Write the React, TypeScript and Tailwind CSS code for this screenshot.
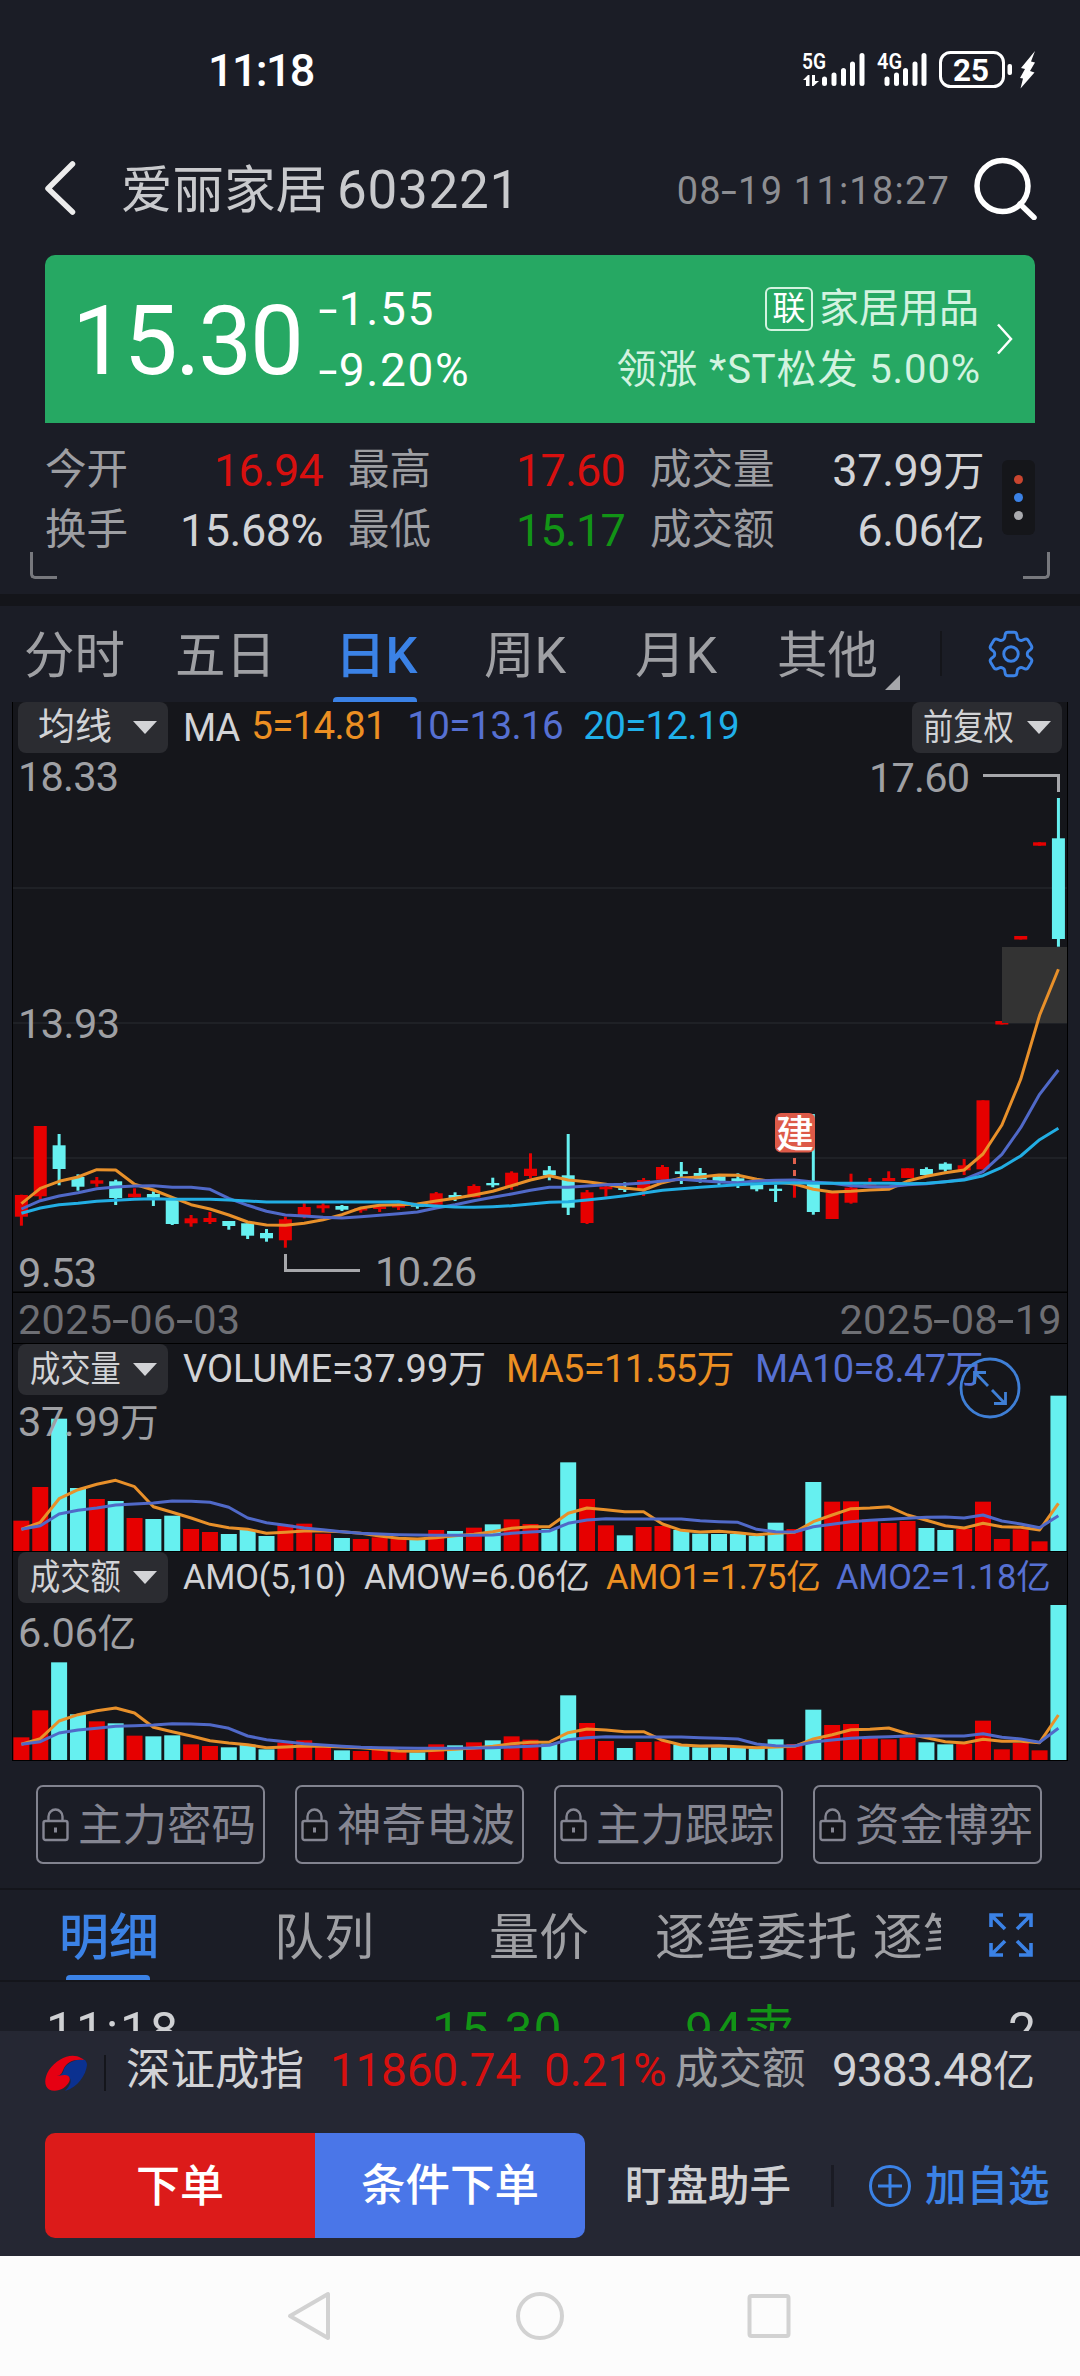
import React from "react";
import { HiOutlineCog6Tooth } from "react-icons/hi2";

const PITCH = 18.855;
const FIRST_X = 21.4;
const cx = (i: number) => FIRST_X + i * PITCH;

const RED = "#e60000";
const CYAN = "#66f0f0";
const ORANGE = "#e8902a";
const VIOLET = "#5069c8";
const SKY = "#22aee4";

// Direction of every session: r = up, c = down.
const DIR = "rrccrcrccrrcccrrrcrrrcrcrcrrccrrcrrccccccrcrrrrrccrrrrrc";

// [high, body top, body bottom, low] for each session.
const CANDLES: number[][] = [
  [1194.7, 1195, 1216.7, 1225.7], [1126, 1126, 1196.3, 1199.3], [1134, 1145.3, 1169, 1185.3], [1174.3, 1177, 1186.7, 1190.7],
  [1177, 1180.3, 1183.7, 1186.7], [1179.7, 1181.3, 1198, 1205], [1188.3, 1193.7, 1197.3, 1197.3], [1191.3, 1194, 1197.7, 1206],
  [1200, 1200, 1224, 1225], [1215, 1218.3, 1223.3, 1226.7], [1212, 1218, 1222, 1224], [1221, 1221, 1226, 1229.7],
  [1223.3, 1223.3, 1235.7, 1239], [1229, 1233, 1238.3, 1241.7], [1216.7, 1219.3, 1240.3, 1247.7], [1203.3, 1207, 1215.3, 1218.3],
  [1203.3, 1205.3, 1208.3, 1212.7], [1205, 1206, 1209.7, 1211], [1207, 1208.3, 1210.5, 1212.7], [1205.3, 1206.7, 1209, 1212],
  [1203.3, 1205, 1207.5, 1210], [1204, 1204.7, 1206.7, 1208.7], [1192, 1193.3, 1204.7, 1205.5], [1192.3, 1195, 1198.3, 1201],
  [1184.3, 1186, 1197.3, 1197.3], [1177.7, 1183, 1185.3, 1187.3], [1171.3, 1172.7, 1186.3, 1189.7], [1153.3, 1168.7, 1176, 1178.3],
  [1166, 1170.3, 1175.3, 1180.3], [1134, 1175.3, 1207.7, 1215], [1190, 1192.3, 1223, 1224], [1184, 1186.7, 1189.3, 1196.7],
  [1182.3, 1187.7, 1190, 1192], [1178, 1180, 1189.3, 1196], [1165, 1167, 1179.7, 1179.7], [1162, 1171.3, 1174, 1184],
  [1168, 1173, 1179.3, 1182.7], [1174, 1176.3, 1182.7, 1185.7], [1173.3, 1178.3, 1181.7, 1188], [1183, 1184.7, 1189.3, 1191.3],
  [1184.7, 1188.7, 1191, 1202], [1182.7, 1183, 1185.3, 1197.7], [1114, 1184, 1212, 1214.7], [1191.3, 1192.7, 1219, 1219],
  [1173.7, 1187.7, 1202.7, 1203.7], [1178, 1183, 1185.5, 1186], [1171.3, 1178, 1181, 1181], [1168.3, 1168.3, 1178, 1178],
  [1167.3, 1169, 1175, 1175], [1162.3, 1163.7, 1169.7, 1171.7], [1159, 1165.3, 1170.3, 1175], [1100.3, 1100.3, 1169.3, 1169.3],
  [1021, 1021, 1024.5, 1024.5], [936, 936, 939.5, 939.5], [842.3, 842.3, 845.7, 845.7], [798, 838.3, 939, 946.7],
];

const PRICE_MA5 = [
  1203.7, 1188.3, 1181.3, 1177, 1169.7, 1170, 1184.3, 1190, 1197.3, 1204.7, 1209, 1215, 1222, 1225, 1225.3, 1223.3, 1219.7, 1214.7,
  1208, 1205.3, 1204.7, 1204, 1201, 1198.3, 1195, 1191.3, 1185.7, 1180, 1175.7, 1180, 1181.7, 1184.3, 1188, 1190, 1182.7, 1178, 1177,
  1175, 1175.3, 1179.3, 1182, 1184, 1189.3, 1192, 1191.3, 1190, 1189.3, 1181, 1176.3, 1172.7, 1170, 1154, 1125, 1079.3, 1015.3, 969.3,
];
const PRICE_MA10 = [
  1209, 1200.7, 1196, 1192.7, 1188.7, 1187, 1186, 1185.7, 1187.3, 1187.3, 1189.3, 1198.3, 1205.3, 1211.3, 1215, 1216, 1217.3, 1218,
  1216.7, 1215.3, 1213.7, 1212, 1208, 1204.7, 1200.7, 1197.3, 1194, 1190.3, 1187.3, 1187.3, 1186, 1184.7, 1184.3, 1183, 1181, 1179.3,
  1180.7, 1182, 1182.7, 1181, 1180.3, 1180, 1182, 1183.3, 1185.7, 1186.7, 1186.7, 1184.7, 1183.7, 1181.7, 1179.3, 1171.7, 1154.3,
  1127.7, 1094.3, 1070,
];
const PRICE_MA20 = [
  1213.3, 1208, 1204.7, 1203.3, 1201.3, 1200.3, 1199.3, 1198.7, 1199.3, 1199.3, 1199.3, 1200, 1201, 1202, 1202, 1202, 1202, 1202, 1202,
  1202, 1201.7, 1205, 1206, 1207, 1207.3, 1206.7, 1205.7, 1204, 1202.3, 1201.7, 1200, 1198, 1195.7, 1193, 1190.3, 1188.7, 1187.3, 1186,
  1184.7, 1183.7, 1183.3, 1182.7, 1183.3, 1183.3, 1183.3, 1183.3, 1183.3, 1183.7, 1183.3, 1181.7, 1180, 1175.7, 1167.3, 1156, 1139.7,
  1128.3,
];

// Volume and turnover levels, in thirds of a pixel.
const VOL = [
  572, 471, 266, 474, 507, 513, 564, 567, 557, 597, 606, 612, 600, 618, 584, 581, 611, 624, 627, 622, 627, 630, 600, 603, 593, 583, 568,
  582, 597, 397, 507, 586, 616, 591, 588, 600, 611, 612, 612, 617, 578, 597, 456, 515, 514, 568, 579, 573, 594, 600, 597, 515, 627, 598,
  634, 197,
];
const VOL_MA5 = [
  598, 577, 506, 479, 463, 451, 470, 530, 547, 564, 583, 593, 598, 610, 607, 603, 603, 605, 610, 618, 625, 627, 623, 617, 613, 605, 595,
  590, 590, 550, 534, 539, 545, 545, 582, 601, 606, 604, 608, 614, 610, 607, 575, 555, 536, 534, 530, 555, 571, 587, 594, 580, 590, 592,
  600, 520,
];
const VOL_MA10 = [
  598, 587, 552, 541, 534, 525, 522, 519, 513, 514, 517, 532, 564, 578, 586, 594, 599, 605, 610, 612, 614, 615, 616, 616, 616, 615, 610,
  606, 603, 580, 570, 566, 567, 567, 567, 567, 572, 575, 577, 598, 605, 606, 590, 583, 575, 571, 568, 565, 562, 561, 564, 555, 573, 582,
  593, 557,
];
const AMO = [
  1221, 1140, 996, 1152, 1173, 1179, 1216, 1218, 1215, 1242, 1247, 1251, 1243, 1257, 1237, 1230, 1250, 1260, 1262, 1259, 1262, 1266,
  1242, 1245, 1236, 1230, 1218, 1228, 1240, 1095, 1178, 1232, 1253, 1235, 1233, 1243, 1251, 1251, 1251, 1254, 1227, 1241, 1138, 1184,
  1181, 1222, 1227, 1222, 1236, 1242, 1240, 1171, 1257, 1238, 1260, 824,
];
const AMO_MA5 = [
  1242, 1225, 1172, 1153, 1141, 1133, 1148, 1191, 1204, 1217, 1231, 1238, 1243, 1252, 1250, 1247, 1248, 1250, 1252, 1257, 1262, 1263,
  1260, 1257, 1253, 1248, 1240, 1236, 1235, 1207, 1196, 1199, 1204, 1204, 1230, 1244, 1247, 1246, 1249, 1252, 1250, 1248, 1226, 1213,
  1198, 1197, 1193, 1210, 1222, 1234, 1238, 1227, 1233, 1233, 1237, 1154,
];
const AMO_MA10 = [
  1242, 1234, 1208, 1199, 1194, 1188, 1186, 1184, 1180, 1181, 1183, 1194, 1217, 1228, 1234, 1240, 1244, 1248, 1251, 1252, 1253, 1254,
  1254, 1254, 1253, 1252, 1250, 1248, 1245, 1228, 1222, 1219, 1220, 1220, 1220, 1220, 1222, 1224, 1226, 1241, 1246, 1247, 1235, 1229,
  1224, 1221, 1219, 1217, 1216, 1217, 1217, 1210, 1221, 1226, 1236, 1194,
];

const points = (ys: number[], f: (v: number) => number = (v) => v) => ys.map((v, i) => `${cx(i).toFixed(1)},${f(v).toFixed(1)}`).join(" ");

function Line({ ys, color, f }: { ys: number[]; color: string; f?: (v: number) => number }) {
  return <polyline points={points(ys, f)} fill="none" stroke={color} strokeWidth={3} strokeLinejoin="round" />;
}

/** Wide hyphen used in dates and signed figures. */
function Dash() {
  return <span className="mx-[0.06em] inline-block origin-center scale-x-150">-</span>;
}

function StatusBar() {
  return (
    <div className="relative flex h-[140px] shrink-0 items-center pl-[208px] pr-[45px] text-white">
      <span className="text-[45px] font-medium leading-none tracking-[-1.700px]">11:18</span>
      <svg className="ml-auto" width="234" height="44" viewBox="801 47 234 44" fill="#fff">
        <text x="802" y="68" fontSize="22.5" fontWeight="600" textLength="24" lengthAdjust="spacingAndGlyphs">5G</text>
        <path d="M803 79l5-5h1.500v11h-3.500v-6zM812 74h3v6h4l-5.500 5h-1.500z" />
        <g stroke="#fff" strokeWidth="5" strokeLinecap="round">
          <path d="M824.500 78v4.500M834 74v8.500M843.500 69.500v13M852.500 63v19.500M862 54.500v28" />
          <path d="M887 78v4.500M896.500 74v8.500M905.500 69.500v13M915 63v19.500M924 54.500v28" />
        </g>
        <text x="877" y="68" fontSize="22.500" fontWeight="600" textLength="25" lengthAdjust="spacingAndGlyphs">4G</text>
        <rect x="940.500" y="51.500" width="63" height="34" rx="10" fill="none" stroke="#fff" strokeWidth="3" />
        <text x="953" y="80" fontSize="32" fontWeight="700" textLength="36" lengthAdjust="spacingAndGlyphs">25</text>
        <rect x="1007.500" y="63" width="4.500" height="11" rx="2" />
        <path d="M1035 50l-14 17 4 1-5 9 3 .5-2.500 10 14-16-4.500-1.500 5-8.500-4-1z" />
      </svg>
    </div>
  );
}

function Header() {
  return (
    <div className="flex h-[96px] shrink-0 items-center pl-[42px] pr-[42px]">
      <svg width="36" height="60" viewBox="0 0 36 60" fill="none" stroke="#ececec" strokeWidth="5.500" strokeLinecap="round" strokeLinejoin="round">
        <path d="M30.500 6L6 30.500 30.500 54" />
      </svg>
      <span className="ml-[43px] mt-[5px] text-[51.500px] leading-none text-[#c9cacd]">爱丽家居</span>
      <span className="ml-[10px] mt-[5px] text-[53px] leading-none tracking-[0.700px] text-[#c9cacd]">603221</span>
      <span className="ml-auto mt-[6px] text-[38px] leading-none tracking-[1.200px] text-[#8d8e92]">
        08
        <Dash />
        19 11:18:27
      </span>
      <svg className="ml-[23px]" width="65" height="64" viewBox="972 156 65 64" fill="none" stroke="#fff" strokeWidth="5.500" strokeLinecap="round">
        <circle cx="1001.500" cy="186" r="25.500" />
        <path d="M1019 204l14 13.500" />
      </svg>
    </div>
  );
}

function QuoteCard() {
  return (
    <div className="mx-[45px] mt-[19px] flex h-[168px] shrink-0 items-center rounded-t-[10px] bg-[#26a863] pl-[27px] text-white">
      <span className="mt-[4px] w-[238px] text-[96px] leading-none tracking-[-2.300px]">15.30</span>
      <div className="ml-[9px] mt-[2px] flex flex-col text-[46px] leading-[61px] tracking-[1.600px]">
        <span>
          <Dash />
          1.55
        </span>
        <span>
          <Dash />
          9.20%
        </span>
      </div>
      <div className="ml-auto flex flex-col items-end text-[40px] leading-[61px] text-[#d3f3e0]">
        <div className="flex items-center">
          <span className="mr-[6px] flex h-[44px] w-[48px] items-center justify-center rounded-[6px] border-2 border-[#d3f3e0] text-[33px] leading-none text-white">联</span>
          家居用品
        </div>
        <span className="mr-[-2px] tracking-[0.900px]">领涨 *ST松发 5.00%</span>
      </div>
      <svg className="ml-[17px] mr-[22px]" width="17" height="32" viewBox="0 0 17 32" fill="none" stroke="#fff" strokeWidth="2.500">
        <path d="M2 1.500L15 16 2 30.500" />
      </svg>
    </div>
  );
}

function Stat({ label, value, className }: { label: string; value: React.ReactNode; className: string }) {
  return (
    <div className="flex h-[60px] items-center justify-between leading-none">
      <span className="text-[41.500px] text-[#9d9ea2]">{label}</span>
      <span className={className}>{value}</span>
    </div>
  );
}

function Stats() {
  return (
    <div className="relative flex h-[171px] shrink-0 pl-[45px] pt-[17px]">
      <div className="w-[278px]">
        <Stat label="今开" value="16.94" className="text-[45px] tracking-[-0.800px] text-[#d8100f]" />
        <Stat label="换手" value="15.68%" className="text-[45px] tracking-[-0.500px] text-[#d2d3d6]" />
      </div>
      <div className="ml-[25px] w-[277px]">
        <Stat label="最高" value="17.60" className="text-[45px] tracking-[-0.800px] text-[#d8100f]" />
        <Stat label="最低" value="15.17" className="text-[45px] tracking-[-0.800px] text-[#129416]" />
      </div>
      <div className="ml-[25px] w-[334px]">
        <Stat label="成交量" value={<>37.99<span className="text-[41px]">万</span></>} className="text-[45px] tracking-[-0.400px] text-[#d2d3d6]" />
        <Stat label="成交额" value={<>6.06<span className="text-[41px]">亿</span></>} className="text-[45px] tracking-[-0.400px] text-[#d2d3d6]" />
      </div>
      <div className="ml-[18px] mt-[20px] flex h-[75px] w-[33px] flex-col items-center justify-center gap-[9px] rounded-[6px] bg-[#15161a]">
        <span className="size-[9px] rounded-full bg-[#c8452f]" />
        <span className="size-[9px] rounded-full bg-[#3b82e6]" />
        <span className="size-[9px] rounded-full bg-[#a9aaae]" />
      </div>
      <span className="absolute bottom-[15px] left-[30px] h-[27px] w-[27px] rounded-bl-[5px] border-b-[3px] border-l-[3px] border-[#77787d]" />
      <span className="absolute bottom-[15px] right-[30px] h-[27px] w-[27px] rounded-br-[5px] border-b-[3px] border-r-[3px] border-[#77787d]" />
    </div>
  );
}

function PeriodTabs() {
  return (
    <div className="relative flex h-[96px] shrink-0 items-center pl-[24px] pt-[5px] text-[50.500px] leading-none text-[#9fa0a4]">
      <span className="w-[151px]">分时</span>
      <span className="w-[160px]">五日</span>
      <span className="w-[149px] font-medium text-[#3b82e6]">日K</span>
      <span className="w-[151px]">周K</span>
      <span className="w-[142px]">月K</span>
      <span>其他</span>
      <svg className="ml-[7px] mt-[51px]" width="15" height="15" viewBox="0 0 15 15">
        <path d="M15 0v15H0z" fill="#a6a7ab" />
      </svg>
      <span className="absolute bottom-0 left-[333px] h-[5px] w-[84px] rounded-t-[4px] bg-[#3b82e6]" />
      <span className="absolute left-[940px] top-[25px] h-[45px] w-[2px] bg-[#14151a]" />
      <HiOutlineCog6Tooth className="absolute left-[982px] top-[19px] size-[58px] text-[#3b82e6] [stroke-width:1.2]" />
    </div>
  );
}

function Caret() {
  return (
    <svg className="absolute right-[11px]" width="24" height="13" viewBox="0 0 24 13">
      <path d="M0 0h24L12 13z" fill="#d2d3d6" />
    </svg>
  );
}

function Picker({ label, className }: { label: string; className: string }) {
  return (
    <div className={`relative flex h-[51px] w-[150px] shrink-0 items-center rounded-[8px] bg-[#2b2c31] leading-none text-[#d2d3d6] ${className}`}>
      <span className="origin-left scale-x-[inherit]">{label}</span>
      <Caret />
    </div>
  );
}

function NarrowPicker({ label, className }: { label: string; className: string }) {
  return (
    <div className={`relative flex h-[51px] w-[150px] shrink-0 items-center rounded-[8px] bg-[#2b2c31] ${className}`}>
      <span className="origin-left scale-x-[0.84] text-[36px] leading-none text-[#d2d3d6]">{label}</span>
      <Caret />
    </div>
  );
}

function PriceChart() {
  return (
    <div className="relative h-[642px] border-b border-black">
      <div className="flex h-[51px] items-center pl-[5px]">
        <Picker label="均线" className="pl-[20px] text-[37px]" />
        <span className="ml-[15px] text-[38px] leading-none tracking-[-1px] text-[#d2d3d6]">MA</span>
        <div className="mb-[2px] ml-[12px] flex text-[38.500px] leading-none tracking-[-0.700px]">
          <span className="w-[156px] text-[#ec8f22]">5=14.81</span>
          <span className="w-[176px] text-[#5670d2]">10=13.16</span>
          <span className="text-[#20b0ea]">20=12.19</span>
        </div>
        <NarrowPicker label="前复权" className="ml-auto mr-[5px] pl-[11px]" />
      </div>
      <svg className="block" width="1054" height="540" viewBox="13 753 1054 540">
        <g fill="#1f2126">
          <rect x="13" y="887" width="1054" height="2" />
          <rect x="13" y="1022" width="1054" height="2" />
          <rect x="13" y="1157" width="1054" height="2" />
        </g>
        {CANDLES.map(([hi, top, bot, lo], i) => (
          <g key={i} fill={DIR[i] === "r" ? RED : CYAN}>
            <rect x={cx(i) - 1.5} y={hi} width={3} height={lo - hi} />
            <rect x={cx(i) - (i === 41 ? 1.5 : 6.5)} y={top} width={i === 41 ? 3 : 13} height={bot - top} />
          </g>
        ))}
        <rect x="1002" y="947" width="65" height="76" fill="#333333" />
        <Line ys={PRICE_MA5} color={ORANGE} />
        <Line ys={PRICE_MA10} color={VIOLET} />
        <Line ys={PRICE_MA20} color={SKY} />
        <path d="M794.500 1158v6M794.500 1170v6" stroke="#e0604c" strokeWidth="3" />
        <rect x="775" y="1113" width="40" height="39.500" rx="6" fill="#dd5a48" />
        <text x="795" y="1147" textAnchor="middle" fontSize="38" fontWeight="500" fill="#fff">建</text>
        <path d="M983 775.500h75.500V792M285.500 1254v16.500H360" fill="none" stroke="#a6a7ab" strokeWidth="3" />
        <g fill="#9fa0a4" fontSize="41.500">
          <text x="18" y="791" textLength="101">18.33</text>
          <text x="869" y="792" textLength="101">17.60</text>
          <text x="18" y="1038" textLength="102">13.93</text>
          <text x="18" y="1287" textLength="79">9.53</text>
          <text x="375" y="1286" textLength="102">10.26</text>
        </g>
        <rect x="13" y="1291.500" width="1054" height="1.500" fill="#000" />
      </svg>
      <div className="flex h-[50px] items-center justify-between pl-[5px] pr-[5px] pt-[3px] text-[41.500px] leading-none tracking-[0.300px] text-[#6e6f74]">
        <span>
          2025
          <Dash />
          06
          <Dash />
          03
        </span>
        <span>
          2025
          <Dash />
          08
          <Dash />
          19
        </span>
      </div>
    </div>
  );
}

function BarChart({ bars, ma5, ma10, base, height }: { bars: number[]; ma5: number[]; ma10: number[]; base: number; height: number }) {
  const y = (v: number) => height - (base - v) / 3;
  return (
    <svg className="block" width="1054" height={height} viewBox={`13 0 1054 ${height}`}>
      {bars.map((v, i) => (
        <rect key={i} x={cx(i) - 8} y={y(v)} width={16} height={height - y(v)} fill={DIR[i] === "r" ? RED : CYAN} />
      ))}
      <Line ys={ma5} color={ORANGE} f={y} />
      <Line ys={ma10} color={VIOLET} f={y} />
    </svg>
  );
}

function VolumePanel() {
  return (
    <div className="relative h-[208px] border-b border-black">
      <div className="flex h-[51px] items-center pl-[5px]">
        <NarrowPicker label="成交量" className="pl-[12px]" />
        <div className="mb-[2px] ml-[15px] flex whitespace-nowrap text-[38px] leading-none">
          <span className="w-[323px] text-[#d2d3d6]">VOLUME=37.99万</span>
          <span className="w-[249px] tracking-[-0.600px] text-[#ec8f22]">MA5=11.55万</span>
          <span className="tracking-[-0.600px] text-[#5670d2]">MA10=8.47万</span>
        </div>
      </div>
      <BarChart bars={VOL} ma5={VOL_MA5} ma10={VOL_MA10} base={663} height={156} />
      <span className="absolute left-[5px] top-[57px] text-[41.500px] leading-none tracking-[-0.400px] text-[#9fa0a4]">
        37.99<span className="text-[38.500px]">万</span>
      </span>
      <svg className="absolute left-[946px] top-[13px]" width="62" height="62" viewBox="-31 -31 62 62" fill="none" stroke="#3f7fd6" strokeWidth="2.800">
        <circle r="29" />
        <path d="M-2-2L-14.500-15M-15.500-4V-15.500H-4M2 2L14.500 15M15.500 4V15.500H4" />
      </svg>
    </div>
  );
}

function TurnoverPanel() {
  return (
    <div className="relative h-[209px] border-b border-black">
      <div className="flex h-[51px] items-center pl-[5px]">
        <NarrowPicker label="成交额" className="pl-[12px]" />
        <div className="ml-[15px] flex whitespace-nowrap text-[34.500px] leading-none tracking-[-0.200px]">
          <span className="w-[181px] text-[#d2d3d6]">AMO(5,10)</span>
          <span className="w-[242px] text-[#d2d3d6]">AMOW=6.06亿</span>
          <span className="w-[230px] text-[#ec8f22]">AMO1=1.75亿</span>
          <span className="text-[#5670d2]">AMO2=1.18亿</span>
        </div>
      </div>
      <BarChart bars={AMO} ma5={AMO_MA5} ma10={AMO_MA10} base={1289} height={157} />
      <span className="absolute left-[5px] top-[60px] text-[41.500px] leading-none tracking-[-0.400px] text-[#9fa0a4]">
        6.06<span className="text-[39px]">亿</span>
      </span>
    </div>
  );
}

function LockedTools() {
  return (
    <div className="flex h-[127px] shrink-0 gap-[30px] pl-[36px] pt-[24px]">
      {["主力密码", "神奇电波", "主力跟踪", "资金博弈"].map((name) => (
        <div key={name} className="flex h-[79px] w-[229px] items-center whitespace-nowrap rounded-[7px] border-2 border-[#82838f] pl-[4px] text-[44.500px] leading-none text-[#858692]">
          <svg className="mr-[9px] shrink-0" width="27" height="34" viewBox="0 0 27 34" fill="none" stroke="#858692" strokeWidth="2.400">
            <path d="M6.500 13V8.500a7 7 0 0 1 14 0V13" />
            <rect x="1.500" y="13" width="24" height="19" rx="2" fill="#15161a" />
            <path d="M13.500 19.500v5" strokeWidth="3" />
          </svg>
          <span className="mt-[3px]">{name}</span>
        </div>
      ))}
    </div>
  );
}

function DetailTabs() {
  return (
    <div className="relative flex h-[94px] shrink-0 items-center border-y-2 border-[#14151b] pl-[59px] text-[50px] leading-none text-[#9fa0a4]">
      <span className="mt-[5px] w-[215px] font-medium text-[#3b82e6]">明细</span>
      <span className="mt-[5px] w-[215px]">队列</span>
      <span className="mt-[5px] w-[166px]">量价</span>
      <div className="mt-[5px] flex w-[286px] overflow-hidden whitespace-nowrap leading-[60px]">
        <span className="mr-[15px] tracking-[0.700px]">逐笔委托</span>
        <span>逐笔成交</span>
      </div>
      <svg className="ml-[48px]" width="44" height="44" viewBox="0 0 44 44" fill="none" stroke="#3b82e6" strokeWidth="3.600">
        <path d="M2 14V2h12M2 2l14 14M30 2h12v12M42 2L28 16M2 30v12h12M2 42l14-14M42 30v12H30M42 42L28 28" />
      </svg>
      <span className="absolute bottom-0 left-[66px] h-[5px] w-[84px] rounded-t-[4px] bg-[#3b82e6]" />
    </div>
  );
}

function TradeRow() {
  return (
    <div className="h-[49px] shrink-0 overflow-hidden">
      <div className="mt-[21px] flex items-center pl-[46px] pr-[44px] text-[50px] leading-[56px] text-[#cfd0d3]">
        <span className="w-[386px] tracking-[1.900px]">11:18</span>
        <span className="w-[253px] tracking-[1px] text-[#129416]">15.30</span>
        <span className="tracking-[1px] text-[#129416]">
          94<span className="text-[52px]">卖</span>
        </span>
        <span className="ml-auto">2</span>
      </div>
    </div>
  );
}

function IndexStrip() {
  return (
    <div className="flex h-[78px] shrink-0 items-center whitespace-nowrap pl-[45px] leading-none">
      <svg className="mt-[6px]" width="42" height="37" viewBox="0 0 42 37">
        <path d="M42 10C41 20 33 32 20 36c6-6 7-11 4-14-3-3-8 0-11-1 4-1 5-3 6-7 3-6 13-11 21-9 1 1 2 3 2 5z" fill="#0b3190" />
        <path d="M36 3C27-3 12 3 4 15-1 23-1 31 4 34.500 11 38 21 34 24.500 26c1-4-1-6-5-6-3 0-5 1-7.500 1 5-1 5-4 7-8 3-6 10-9.500 20-8-1-1-2-1.500-3-2z" fill="#e60012" />
      </svg>
      <span className="ml-[17px] mt-[5px] h-[36px] w-[2px] bg-[#14151b]" />
      <span className="ml-[20px] text-[44.500px] text-[#d2d3d6]">深证成指</span>
      <span className="ml-[26px] w-[214px] text-[46px] tracking-[-0.300px] text-[#d8100f]">11860.74</span>
      <span className="w-[131px] text-[46px] tracking-[-0.200px] text-[#d8100f]">0.21%</span>
      <span className="text-[43.500px] text-[#9d9ea2]">成交额</span>
      <span className="ml-auto mr-[46px] text-[46px] tracking-[-0.900px] text-[#d2d3d6]">
        9383.48<span className="text-[42px]">亿</span>
      </span>
    </div>
  );
}

function ActionBar() {
  return (
    <div className="flex shrink-0 items-center whitespace-nowrap pl-[45px] pt-[24px] leading-none">
      <button className="h-[105px] w-[270px] rounded-l-[10px] bg-[#dc1b1a] pt-[2px] text-[44px] font-medium text-white">下单</button>
      <button className="h-[105px] w-[270px] rounded-r-[10px] bg-[#4a76e8] pt-[2px] text-[44.500px] font-medium text-white">条件下单</button>
      <span className="ml-[40px] mt-[3px] text-[41.500px] font-medium text-[#cfd0d3]">盯盘助手</span>
      <span className="ml-[40px] h-[42px] w-[3px] bg-[#1a1b24]" />
      <svg className="ml-[34px]" width="44" height="44" viewBox="-22 -22 44 44" fill="none" stroke="#3b82e6" strokeWidth="3">
        <circle r="19.500" />
        <path d="M-12 0h24M0-12v24" />
      </svg>
      <span className="ml-[13px] mt-[3px] text-[41.500px] font-medium text-[#3b82e6]">加自选</span>
    </div>
  );
}

function NavBar() {
  return (
    <div className="flex h-[120px] shrink-0 items-center bg-[#fcfcfc]">
      <svg className="ml-[286px]" width="48" height="52" viewBox="286 2290 48 52" fill="none" stroke="#d2d2d2" strokeWidth="4" strokeLinejoin="round">
        <path d="M328 2294v44L290 2316z" />
      </svg>
      <svg className="ml-[180px]" width="52" height="52" viewBox="-26 -26 52 52" fill="none" stroke="#d2d2d2" strokeWidth="4">
        <circle r="22" />
      </svg>
      <svg className="ml-[180px]" width="48" height="52" viewBox="0 0 48 52" fill="none" stroke="#d2d2d2" strokeWidth="4">
        <rect x="3.500" y="6" width="39" height="40" rx="2" />
      </svg>
    </div>
  );
}

export default function App() {
  return (
    <div className="flex h-[2376px] w-[1080px] flex-col overflow-hidden bg-[#1b1d26] font-['Roboto','Noto_Sans_CJK_SC',sans-serif]">
      <StatusBar />
      <Header />
      <QuoteCard />
      <Stats />
      <div className="h-[12px] shrink-0 bg-[#14151a]" />
      <PeriodTabs />
      <div className="mx-[12px] h-[1059px] shrink-0 border-x border-black bg-[#15161b]">
        <PriceChart />
        <VolumePanel />
        <TurnoverPanel />
      </div>
      <LockedTools />
      <DetailTabs />
      <TradeRow />
      <div className="h-[225px] shrink-0 bg-[#252733]">
        <IndexStrip />
        <ActionBar />
      </div>
      <NavBar />
    </div>
  );
}
